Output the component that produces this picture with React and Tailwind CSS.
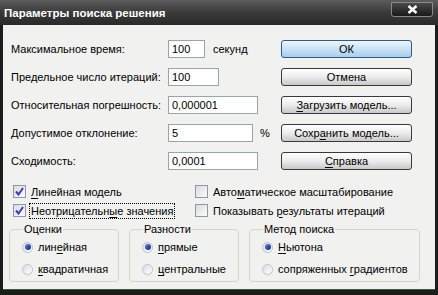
import React from 'react';

const font = { fontFamily: '"Liberation Sans", Arial, sans-serif' };

/* Text with one underlined access key */
function Key({ text, at }) {
  if (at < 0) return <>{text}</>;
  return (
    <>
      {text.slice(0, at)}
      <span className="underline underline-offset-[2px]">{text[at]}</span>
      {text.slice(at + 1)}
    </>
  );
}

const fields = [
  { label: 'Максимальное время:', value: '100', w: 'w-[37px]', unit: 'секунд' },
  { label: 'Предельное число итераций:', value: '100', w: 'w-[51px]' },
  { label: 'Относительная погрешность:', value: '0,000001', w: 'w-[90px]' },
  { label: 'Допустимое отклонение:', value: '5', w: 'w-[85px]', unit: '%' },
  { label: 'Сходимость:', value: '0,0001', w: 'w-[90px]' },
];

const buttons = [
  { text: 'ОК', at: -1, def: true },
  { text: 'Отмена', at: -1 },
  { text: 'Загрузить модель...', at: 0 },
  { text: 'Сохранить модель...', at: 4 },
  { text: 'Справка', at: 0 },
];

function Check({ checked, text, at, focus }) {
  return (
    <div className="flex items-center h-[19px]">
      <span className="w-[13px] h-[13px] border border-[#8b99ad] bg-gradient-to-br from-[#dcdcdc] to-[#fbfbfb] flex items-center justify-center shrink-0">
        {checked && (
          <svg width="9" height="9" viewBox="0 0 9 9">
            <path d="M1 4.5 L3.5 7.5 L8 1" fill="none" stroke="#3c3cb4" strokeWidth="2" />
          </svg>
        )}
      </span>
      <span className={`ml-[4px] px-[1px] leading-[14px] whitespace-nowrap ${focus ? 'outline outline-1 outline-dotted outline-black' : ''}`}>
        <Key text={text} at={at} />
      </span>
    </div>
  );
}

function Radio({ on, text, at }) {
  return (
    <div className="flex items-center h-[22px]">
      <span className="w-[11px] h-[11px] rounded-full border border-[#b8c4d4] bg-gradient-to-br from-[#d8dce4] to-[#ffffff] flex items-center justify-center shrink-0">
        {on && <span className="w-[6px] h-[6px] rounded-full bg-gradient-to-br from-[#6a7ee0] to-[#14207a]" />}
      </span>
      <span className="ml-[5px] whitespace-nowrap">
        <Key text={text} at={at} />
      </span>
    </div>
  );
}

function Group({ title, w, children }) {
  return (
    <fieldset className={`${w} h-[59px] border border-[#d5d5c8] rounded-[4px] pl-[12px] pt-[1px]`}>
      <legend className="ml-[1px] px-[1px] leading-[12px]">{title}</legend>
      {children}
    </fieldset>
  );
}

export default function App() {
  return (
    <div className="w-[438px] h-[295px] bg-[#1c1c1c] flex flex-col text-[11px] text-black" style={font}>
      {/* Title bar */}
      <div className="h-[25px] flex items-start justify-between bg-gradient-to-b from-[#5c5c5c] via-[#3a3a3a] to-[#2a2a2a] pl-[4px] pr-[5px]">
        <span className="mt-[6px] text-white font-bold text-[11.5px] leading-[14px]">Параметры поиска решения</span>
        <span className="mt-[2px] w-[42px] h-[15px] rounded-b-[3px] border border-[#8a8a8a] bg-gradient-to-b from-[#4a4a4a] to-[#1a1a1a] flex items-center justify-center">
          <svg width="11" height="9" viewBox="0 0 11 9">
            <path d="M1.5 1 L9.5 8 M9.5 1 L1.5 8" stroke="white" strokeWidth="2.4" />
          </svg>
        </span>
      </div>

      {/* Client area */}
      <div className="ml-[3px] mr-[3px] h-[265px] bg-[#f1f1ef] pt-[15px] border-b border-[#3d5c3d]">
        <div className="flex">
          <div className="w-[278px] pl-[8px] flex flex-col gap-[10px]">
            {fields.map((f) => (
              <div key={f.label} className="flex items-center h-[18px] whitespace-nowrap">
                <span className="w-[157px]">{f.label}</span>
                <span className={`${f.w} h-[18px] border border-[#9aa4b0] bg-white pl-[3px] leading-[16px]`}>{f.value}</span>
                {f.unit && <span className={f.unit === '%' ? 'ml-[7px]' : 'ml-[8px]'}>{f.unit}</span>}
              </div>
            ))}
          </div>
          <div className="w-[131px] flex flex-col gap-[10px]">
            {buttons.map((b) => (
              <div
                key={b.text}
                className={`h-[18px] rounded-[3px] border flex items-center justify-center leading-[14px] ${
                  b.def
                    ? 'border-[#2c5a94] bg-gradient-to-b from-[#eef6fd] via-[#c9e3f7] to-[#a7cdea]'
                    : 'border-[#3a3a3a] bg-gradient-to-b from-[#ffffff] via-[#ececec] to-[#c9c9c9]'
                }`}
              >
                <Key text={b.text} at={b.at} />
              </div>
            ))}
          </div>
        </div>

        <div className="flex mt-[12px] pl-[10px]">
          <div className="w-[182px] flex flex-col">
            <Check checked text="Линейная модель" at={0} />
            <Check checked text="Неотрицательные значения" at={13} focus />
          </div>
          <div className="flex flex-col">
            <Check text="Автоматическое масштабирование" at={4} />
            <Check text="Показывать результаты итераций" at={11} />
          </div>
        </div>

        <div className="flex pl-[6px] gap-[10px] mt-[3px]">
          <Group title="Оценки" w="w-[110px]">
            <Radio on text="линейная" at={3} />
            <Radio text="квадратичная" at={0} />
          </Group>
          <Group title="Разности" w="w-[110px]">
            <Radio on text="прямые" at={0} />
            <Radio text="центральные" at={0} />
          </Group>
          <Group title="Метод поиска" w="w-[171px]">
            <Radio on text="Ньютона" at={0} />
            <Radio text="сопряженных градиентов" at={12} />
          </Group>
        </div>
      </div>
    </div>
  );
}
